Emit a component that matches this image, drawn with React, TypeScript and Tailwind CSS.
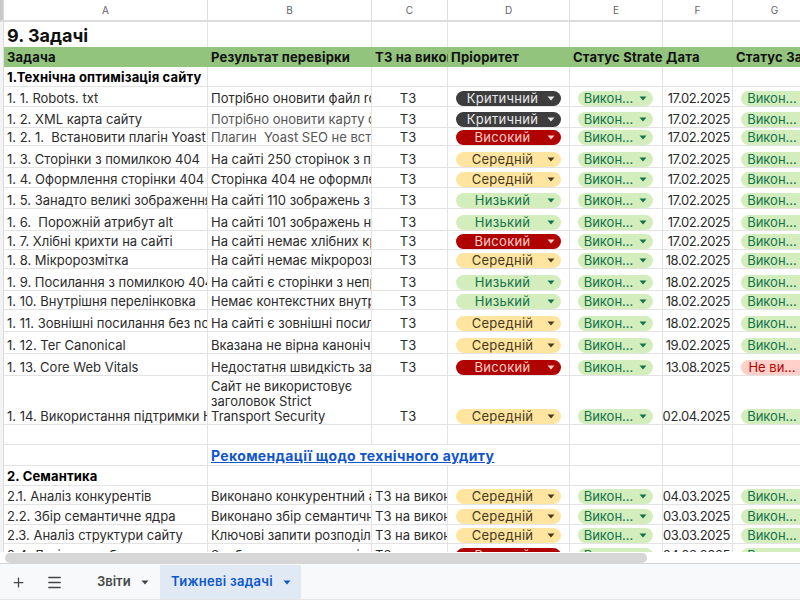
import { Menu, Plus } from 'lucide-react';

const gridCols = 'grid grid-cols-[204px_164px_76px_122px_93px_70px_84px]';
const line = 'border-r border-b border-[#e3e3e3]';

const chipStyles: Record<string, { bg: string; arrow: string }> = {
    'Критичний': { bg: 'bg-[#3d3d3d] text-[#e8e8e8]', arrow: 'fill-[#e8e8e8]' },
    'Високий': { bg: 'bg-[#b10202] text-[#ffcfc9]', arrow: 'fill-[#ffcfc9]' },
    'Середній': { bg: 'bg-[#ffe5a0] text-[#473821]', arrow: 'fill-[#473821]' },
    'Низький': { bg: 'bg-[#d4edbc] text-[#11734b]', arrow: 'fill-[#11734b]' },
    'Викон...': { bg: 'bg-[#d4edbc] text-[#11734b]', arrow: 'fill-[#11734b]' },
    'Не ви...': { bg: 'bg-[#ffcfc9] text-[#b10202]', arrow: 'fill-[#b10202]' },
};

const rows = [
    { h: 'h-[20px]', a: '1. 1. Robots. txt', b: 'Потрібно оновити файл robots', p: 'Критичний', d: '17.02.2025' },
    { h: 'h-[21px]', a: '1. 2. XML карта сайту', b: 'Потрібно оновити карту сайту', p: 'Критичний', d: '17.02.2025', muted: true },
    { h: 'h-[18px]', a: '1. 2. 1.  Встановити плагін Yoast SEO', b: 'Плагин  Yoast SEO не встановлено', p: 'Високий', d: '17.02.2025', muted: true },
    { h: 'h-[22px]', a: '1. 3. Сторінки з помилкою 404', b: 'На сайті 250 сторінок з помилкою', p: 'Середній', d: '17.02.2025' },
    { h: 'h-[20px]', a: '1. 4. Оформлення сторінки 404', b: 'Сторінка 404 не оформлена', p: 'Середній', d: '17.02.2025' },
    { h: 'h-[21px]', a: '1. 5. Занадто великі зображення', b: 'На сайті 110 зображень з великою', p: 'Низький', d: '17.02.2025' },
    { h: 'h-[22px]', a: '1. 6.  Порожній атрибут alt', b: 'На сайті 101 зображень не має', p: 'Низький', d: '17.02.2025' },
    { h: 'h-[19px]', a: '1. 7. Хлібні крихти на сайті', b: 'На сайті немає хлібних крихт', p: 'Високий', d: '17.02.2025' },
    { h: 'h-[19px]', a: '1. 8. Мікророзмітка', b: 'На сайті немає мікророзмітки', p: 'Середній', d: '18.02.2025' },
    { h: 'h-[22px]', a: '1. 9. Посилання з помилкою 404', b: 'На сайті є сторінки з неправильними', p: 'Низький', d: '18.02.2025' },
    { h: 'h-[19px]', a: '1. 10. Внутрішня перелінковка', b: 'Немає контекстних внутрішніх', p: 'Низький', d: '18.02.2025' },
    { h: 'h-[22px]', a: '1. 11. Зовнішні посилання без noopener', b: 'На сайті є зовнішні посилання', p: 'Середній', d: '18.02.2025' },
    { h: 'h-[22px]', a: '1. 12. Тег Canonical', b: 'Вказана не вірна канонічна', p: 'Середній', d: '19.02.2025' },
    { h: 'h-[22px]', a: '1. 13. Core Web Vitals', b: 'Недостатня швидкість завантаження', p: 'Високий', d: '13.08.2025', g: 'Не ви...' },
    {
        h: 'h-[49px]',
        a: '1. 14. Використання підтримки HSTS',
        b: 'Сайт не використовує заголовок Strict Transport Security',
        p: 'Середній',
        d: '02.04.2025',
        wrap: true,
    },
];

const semantics = [
    { h: 'h-[19px]', a: '2.1. Аналіз конкурентів', b: 'Виконано конкурентний аналіз', p: 'Середній', d: '04.03.2025' },
    { h: 'h-[20px]', a: '2.2. Збір семантичне ядра', b: 'Виконано збір семантичного ядра', p: 'Середній', d: '03.03.2025' },
    { h: 'h-[19px]', a: '2.3. Аналіз структури сайту', b: 'Ключові запити розподілені', p: 'Середній', d: '03.03.2025' },
    { h: 'h-[20px]', a: '2.4. Логічна розбивка', b: 'Зроблено кластеризацію запитів', p: 'Високий', d: '04.03.2025' },
];

function Arrow({ className }: { className: string }) {
    return (
        <svg width="8" height="5" viewBox="0 0 8 5" className={`shrink-0 ${className}`}>
            <polygon points="0.5,0.5 7.5,0.5 4,4.5" />
        </svg>
    );
}

function Chip({ label, wide, overflow }: { label: string; wide?: boolean; overflow?: boolean }) {
    const style = chipStyles[label];
    return (
        <div
            className={`flex h-[15px] items-center rounded-full text-[13px] leading-none ${style.bg} ${
                wide ? 'w-[105px] pr-[6px] tracking-[0.3px]' : 'w-[75px] pr-[6px]'
            } ${overflow ? 'shrink-0' : ''}`}
        >
            <span className={`flex-1 text-center whitespace-nowrap ${wide ? 'pl-[3px]' : 'pl-[1px]'}`}>{label}</span>
            <Arrow className={style.arrow} />
        </div>
    );
}

function Row({ row }: { row: (typeof rows)[number] & { g?: string; wrap?: boolean; muted?: boolean; tz?: boolean } }) {
    return (
        <div className={`${gridCols} ${row.h} text-[13px] leading-[15px] text-[#2b2b2b]`}>
            <div className={`${line} flex items-end pl-[3px] whitespace-pre`}>
                <span className="min-w-0 overflow-hidden">{row.a}</span>
            </div>
            <div
                className={`${line} flex items-end pl-[3px] ${row.wrap ? 'whitespace-normal' : 'whitespace-pre'} ${
                    row.muted ? 'text-[#555555]' : ''
                }`}
            >
                <span className="min-w-0 overflow-hidden">{row.b}</span>
            </div>
            {row.tz ? (
                <div className={`${line} flex items-end pl-[3px] whitespace-nowrap`}>
                    <span className="min-w-0 overflow-hidden">ТЗ на виконання</span>
                </div>
            ) : (
                <div className={`${line} flex items-end justify-center pr-[3px]`}>ТЗ</div>
            )}
            <div className={`${line} flex items-end justify-center pr-[1px]`}>
                <Chip label={row.p} wide />
            </div>
            <div className={`${line} flex items-end justify-center pr-[2px]`}>
                <Chip label="Викон..." />
            </div>
            <div className={`${line} flex items-end justify-end pr-[2px] tracking-[-0.4px]`}>{row.d}</div>
            <div className="flex items-end overflow-hidden border-b border-[#e3e3e3] pl-[8px]">
                <Chip label={row.g ?? 'Викон...'} overflow />
            </div>
        </div>
    );
}

function EmptyCells() {
    return (
        <>
            <div className={line} />
            <div className={line} />
            <div className={line} />
            <div className={line} />
            <div className={line} />
            <div className="border-b border-[#e3e3e3]" />
        </>
    );
}

function SectionRow({ title }: { title: string }) {
    return (
        <div className={`${gridCols} h-[20px] text-[13px] leading-[15px]`}>
            <div className={`${line} flex items-end px-[3px] pb-[1px] font-bold tracking-[0.15px] whitespace-nowrap text-black`}>
                {title}
            </div>
            <EmptyCells />
        </div>
    );
}

export default function App() {
    const columns = [
        { label: 'A', w: 'w-[204px]' },
        { label: 'B', w: 'w-[164px]' },
        { label: 'C', w: 'w-[76px]' },
        { label: 'D', w: 'w-[122px]' },
        { label: 'E', w: 'w-[93px]' },
        { label: 'F', w: 'w-[70px]' },
        { label: 'G', w: 'w-[84px]' },
    ];

    const headers = ['Задача', 'Результат перевірки', 'ТЗ на виконавця', 'Пріоритет', 'Статус Strategy', 'Дата', 'Статус Задачі'];

    return (
        <div className="flex h-[600px] w-[800px] flex-col overflow-hidden bg-white font-['Inter','Liberation_Sans',sans-serif]">
            {/* Column letters */}
            <div className="flex h-[22px] shrink-0 border-b-2 border-[#dcdcdc]">
                <div className="w-[4px] shrink-0 border-r border-[#dcdcdc] bg-[#c9c9c9]" />
                {columns.map((col) => (
                    <div
                        key={col.label}
                        className={`${col.w} flex shrink-0 items-center justify-center border-r border-[#dcdcdc] text-[10px] text-[#5f6368]`}
                    >
                        {col.label}
                    </div>
                ))}
            </div>

            {/* Sheet */}
            <div className="flex min-h-0 flex-1">
                <div className="w-[4px] shrink-0 border-r border-[#dcdcdc] bg-[#f1f3f4]" />
                <div className="min-w-0 flex-1 overflow-hidden">
                    <div className={`${gridCols} h-[25px]`}>
                        <div className="flex items-end border-r border-[#e3e3e3] px-[3px] text-[18px] leading-[22px] font-bold whitespace-nowrap text-[#111111]">
                            9. Задачі
                        </div>
                        <div className="border-r border-[#e3e3e3]" />
                        <div className="border-r border-[#e3e3e3]" />
                        <div className="border-r border-[#e3e3e3]" />
                        <div className="border-r border-[#e3e3e3]" />
                        <div className="border-r border-[#e3e3e3]" />
                    </div>
                    <div className={`${gridCols} h-[20px] bg-[#93c47d] text-[13px] leading-[20px] font-bold tracking-[0.2px] text-[#111111]`}>
                        {headers.map((label) => (
                            <div key={label} className="overflow-hidden pl-[3px] whitespace-nowrap">
                                {label}
                            </div>
                        ))}
                    </div>
                    <SectionRow title="1.Технічна оптимізація сайту" />
                    {rows.map((row) => (
                        <Row key={row.a} row={row} />
                    ))}
                    <div className={`${gridCols} h-[20px]`}>
                        <div className={line} />
                        <EmptyCells />
                    </div>
                    <div className={`${gridCols} h-[21px]`}>
                        <div className={line} />
                        <div className="relative border-b border-[#e3e3e3]">
                            <a
                                href="#"
                                className="absolute bottom-[1px] left-[3px] text-[14px] leading-[16px] font-bold tracking-[0.35px] whitespace-nowrap text-[#1155cc] underline"
                            >
                                Рекомендації щодо технічного аудиту
                            </a>
                        </div>
                        <div className="border-b border-[#e3e3e3]" />
                        <div className={line} />
                        <div className={line} />
                        <div className={line} />
                        <div className="border-b border-[#e3e3e3]" />
                    </div>
                    <SectionRow title="2. Семантика" />
                    {semantics.map((row) => (
                        <Row key={row.a} row={{ ...row, tz: true }} />
                    ))}
                </div>
            </div>

            {/* Horizontal scrollbar */}
            <div className="flex h-[12px] shrink-0 items-center border-b border-[#d5d5d5] bg-white pl-[5px]">
                <div className="h-[10px] w-[642px] rounded-full bg-[#d6d6d6]" />
            </div>

            {/* Sheet tabs */}
            <div className="flex h-[36px] shrink-0 items-stretch border-b border-[#e4e4e4] bg-[#f8f9fa] pt-[1px] text-[13px] font-semibold">
                <div className="flex w-[36px] items-center justify-center text-[#444746]">
                    <Plus size={15} strokeWidth={2} />
                </div>
                <div className="flex w-[36px] items-center justify-center text-[#444746]">
                    <Menu size={17} strokeWidth={2} />
                </div>
                <div className="flex w-[88px] items-center pl-[25px] text-[#444746]">
                    <span>Звіти</span>
                    <Arrow className="ml-[10px] fill-[#444746]" />
                </div>
                <div className="flex w-[141px] items-center bg-[#e1e9f5] pl-[11px] tracking-[0.3px] text-[#0b57d0]">
                    <span>Тижневі задачі</span>
                    <Arrow className="ml-[10px] fill-[#0b57d0]" />
                </div>
            </div>
        </div>
    );
}
